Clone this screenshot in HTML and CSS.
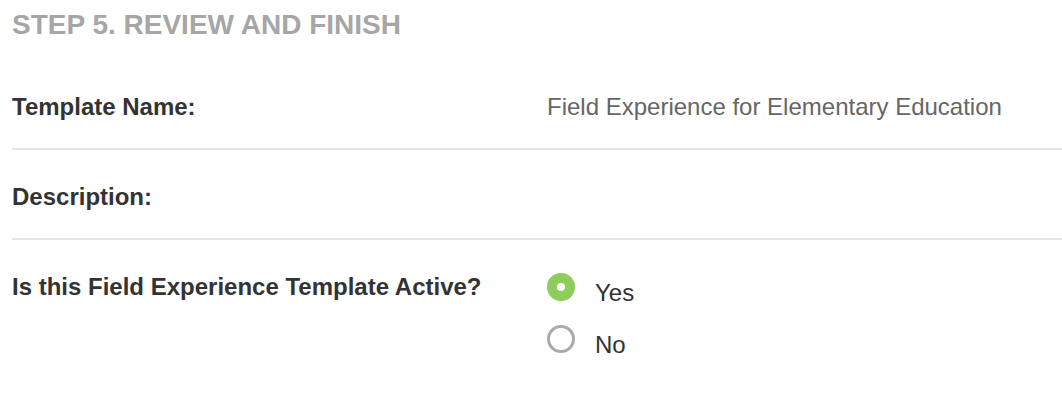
FILE: index.html
```html
<!DOCTYPE html>
<html lang="en">
<head>
<meta charset="utf-8">
<title>Step 5. Review and Finish</title>
<link rel="stylesheet" href="styles.css">
</head>
<body>
<div class="page">
  <h2 class="step-title">STEP 5. REVIEW AND FINISH</h2>
  <div class="review">
    <div class="row">
      <div class="label">Template Name:</div>
      <div class="value">Field Experience for Elementary Education</div>
    </div>
    <div class="row">
      <div class="label">Description:</div>
      <div class="value"></div>
    </div>
    <div class="row row-last">
      <div class="label">Is this Field Experience Template Active?</div>
      <div class="value options">
        <label class="option"><span class="radio radio-on"></span><span class="option-text">Yes</span></label>
        <label class="option"><span class="radio"></span><span class="option-text">No</span></label>
      </div>
    </div>
  </div>
</div>
</body>
</html>
```

FILE: styles.css
```css
html, body {
  margin: 0;
  padding: 0;
  background: #ffffff;
}
.page {
  padding: 0 0 0 12px;
  font-family: "Liberation Sans", Arial, Helvetica, sans-serif;
}
.step-title {
  margin: 0;
  padding-top: 8px;
  font-size: 28px;
  line-height: 34px;
  font-weight: bold;
  color: #a6a6a6;
}
.review {
  margin-top: 18px;
}
.row {
  display: flex;
  align-items: flex-start;
  border-bottom: 2px solid #e6e6e6;
  padding: 33px 0 27px;
}
.row-last {
  border-bottom: none;
}
.label {
  width: 535px;
  font-size: 24px;
  line-height: 28px;
  font-weight: bold;
  color: #333333;
}
.value {
  flex: 1;
  font-size: 24px;
  line-height: 28px;
  color: #666666;
  min-height: 28px;
}
.options {
  display: flex;
  flex-direction: column;
  gap: 18px;
}
.option {
  display: flex;
  align-items: flex-start;
  gap: 20px;
  color: #333333;
}
.radio {
  box-sizing: border-box;
  width: 28px;
  height: 28px;
  border-radius: 50%;
  border: 3px solid #aaaaaa;
  background: #ffffff;
}
.radio-on {
  border: 10px solid #8fcd5a;
}
.option-text {
  margin-top: 6px;
}
```
